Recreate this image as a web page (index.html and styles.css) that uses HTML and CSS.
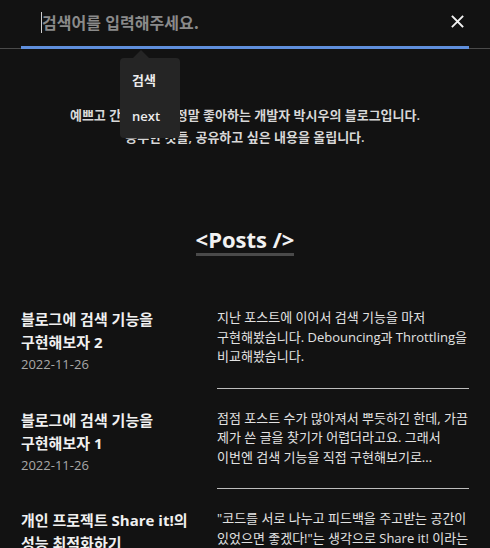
FILE: index.html
```html
<!DOCTYPE html>
<html lang="ko">
<head>
<meta charset="utf-8">
<title>Blog</title>
<link rel="stylesheet" href="styles.css">
</head>
<body>
<header class="search-bar">
  <div class="search-field">
    <span class="caret"></span>
    <input class="search-input" type="text" placeholder="검색어를 입력해주세요.">
    <button class="close-btn" aria-label="닫기">
      <svg width="13" height="13" viewBox="0 0 13 13"><path d="M1.5 1.5L11.5 11.5M11.5 1.5L1.5 11.5" stroke="#f2f2f2" stroke-width="1.8" stroke-linecap="square"/></svg>
    </button>
  </div>
</header>

<div class="suggest">
  <div class="suggest-item">검색</div>
  <div class="suggest-item">next</div>
</div>

<main class="content">
  <p class="intro">예쁘고 간단한 것을 정말 좋아하는 개발자 박시우의 블로그입니다.<br>공부한 것들, 공유하고 싶은 내용을 올립니다.</p>

  <div class="posts-head"><h2 class="posts-title">&lt;Posts /&gt;</h2></div>

  <section class="post-list">
    <article class="post">
      <div class="post-meta">
        <h3 class="post-title">블로그에 검색 기능을 구현해보자 2</h3>
        <div class="post-date">2022-11-26</div>
      </div>
      <div class="post-summary">지난 포스트에 이어서 검색 기능을 마저 구현해봤습니다. Debouncing과 Throttling을 비교해봤습니다.</div>
    </article>
    <article class="post">
      <div class="post-meta">
        <h3 class="post-title">블로그에 검색 기능을 구현해보자 1</h3>
        <div class="post-date">2022-11-26</div>
      </div>
      <div class="post-summary">점점 포스트 수가 많아져서 뿌듯하긴 한데, 가끔 제가 쓴 글을 찾기가 어렵더라고요. 그래서 이번엔 검색 기능을 직접 구현해보기로...</div>
    </article>
    <article class="post">
      <div class="post-meta">
        <h3 class="post-title">개인 프로젝트 Share it!의 성능 최적화하기</h3>
        <div class="post-date">2022-11-20</div>
      </div>
      <div class="post-summary">"코드를 서로 나누고 피드백을 주고받는 공간이 있었으면 좋겠다!"는 생각으로 Share it! 이라는 프로젝트를 시작했습니다.</div>
    </article>
  </section>
</main>
</body>
</html>
```

FILE: styles.css
```css
* { box-sizing: border-box; }

html, body {
  margin: 0;
  padding: 0;
  background: #121212;
  color: #e6e6e6;
  font-family: "Open Sans", "Noto Sans CJK KR", sans-serif;
  word-break: keep-all;
  overflow: hidden;
}

.search-bar {
  height: 49px;
  padding: 0 21px;
  border-bottom: 1px solid #4a4a4a;
}

.search-field {
  position: relative;
  height: 49px;
  margin-bottom: -1px;
  border-bottom: 3px solid #5f8fdc;
  display: flex;
  align-items: center;
  padding: 0 0 3px 20px;
}

.caret {
  position: absolute;
  left: 20px;
  top: 12px;
  width: 1px;
  height: 21px;
  background: #cfcfcf;
}

.search-input {
  flex: 1;
  background: transparent;
  border: none;
  outline: none;
  padding: 0 0 0 1px;
  color: #eee;
  font-family: "Noto Sans CJK KR", "Open Sans", sans-serif;
  font-size: 16px;
  font-weight: 600;
}
.search-input::placeholder { color: #8a8a8a; }

.close-btn {
  background: none;
  border: none;
  padding: 0;
  margin-right: 5px;
  width: 13px;
  height: 13px;
  display: flex;
}

.suggest {
  position: absolute;
  left: 120px;
  top: 58px;
  width: 60px;
  height: 80px;
  background: #252525;
  border-radius: 4px;
  padding-top: 4px;
}
.suggest::before {
  content: "";
  position: absolute;
  left: 13px;
  top: -8px;
  border-left: 8px solid transparent;
  border-right: 8px solid transparent;
  border-bottom: 8px solid #252525;
}
.suggest-item {
  height: 36px;
  line-height: 36px;
  padding-left: 12px;
  font-size: 13px;
  font-weight: 600;
  color: #ececec;
}

.content {
  padding: 0 21px;
}

.intro {
  margin: 55px 0 0;
  text-align: center;
  font-size: 13px;
  line-height: 22px;
  font-weight: 600;
  color: #d8d8d8;
}

.posts-head {
  margin-top: 78px;
  text-align: center;
}
.posts-title {
  display: inline-block;
  margin: 0;
  font-size: 22px;
  line-height: 27px;
  font-weight: 700;
  color: #f2f2f2;
  border-bottom: 3px solid #4a4a4a;
}

.post-list {
  margin-top: 52px;
}

.post {
  display: grid;
  grid-template-columns: 170px 1fr;
  column-gap: 26px;
  margin-bottom: 20px;
}

.post-title {
  margin: 0;
  font-size: 15px;
  line-height: 23px;
  font-weight: 700;
  color: #f0f0f0;
}

.post-date {
  font-size: 13px;
  line-height: 21px;
  color: #a8a8a8;
}

.post-summary {
  font-size: 13px;
  line-height: 19.5px;
  color: #e2e2e2;
  padding-bottom: 21px;
  border-bottom: 1px solid #bdbdbd;
}
```
